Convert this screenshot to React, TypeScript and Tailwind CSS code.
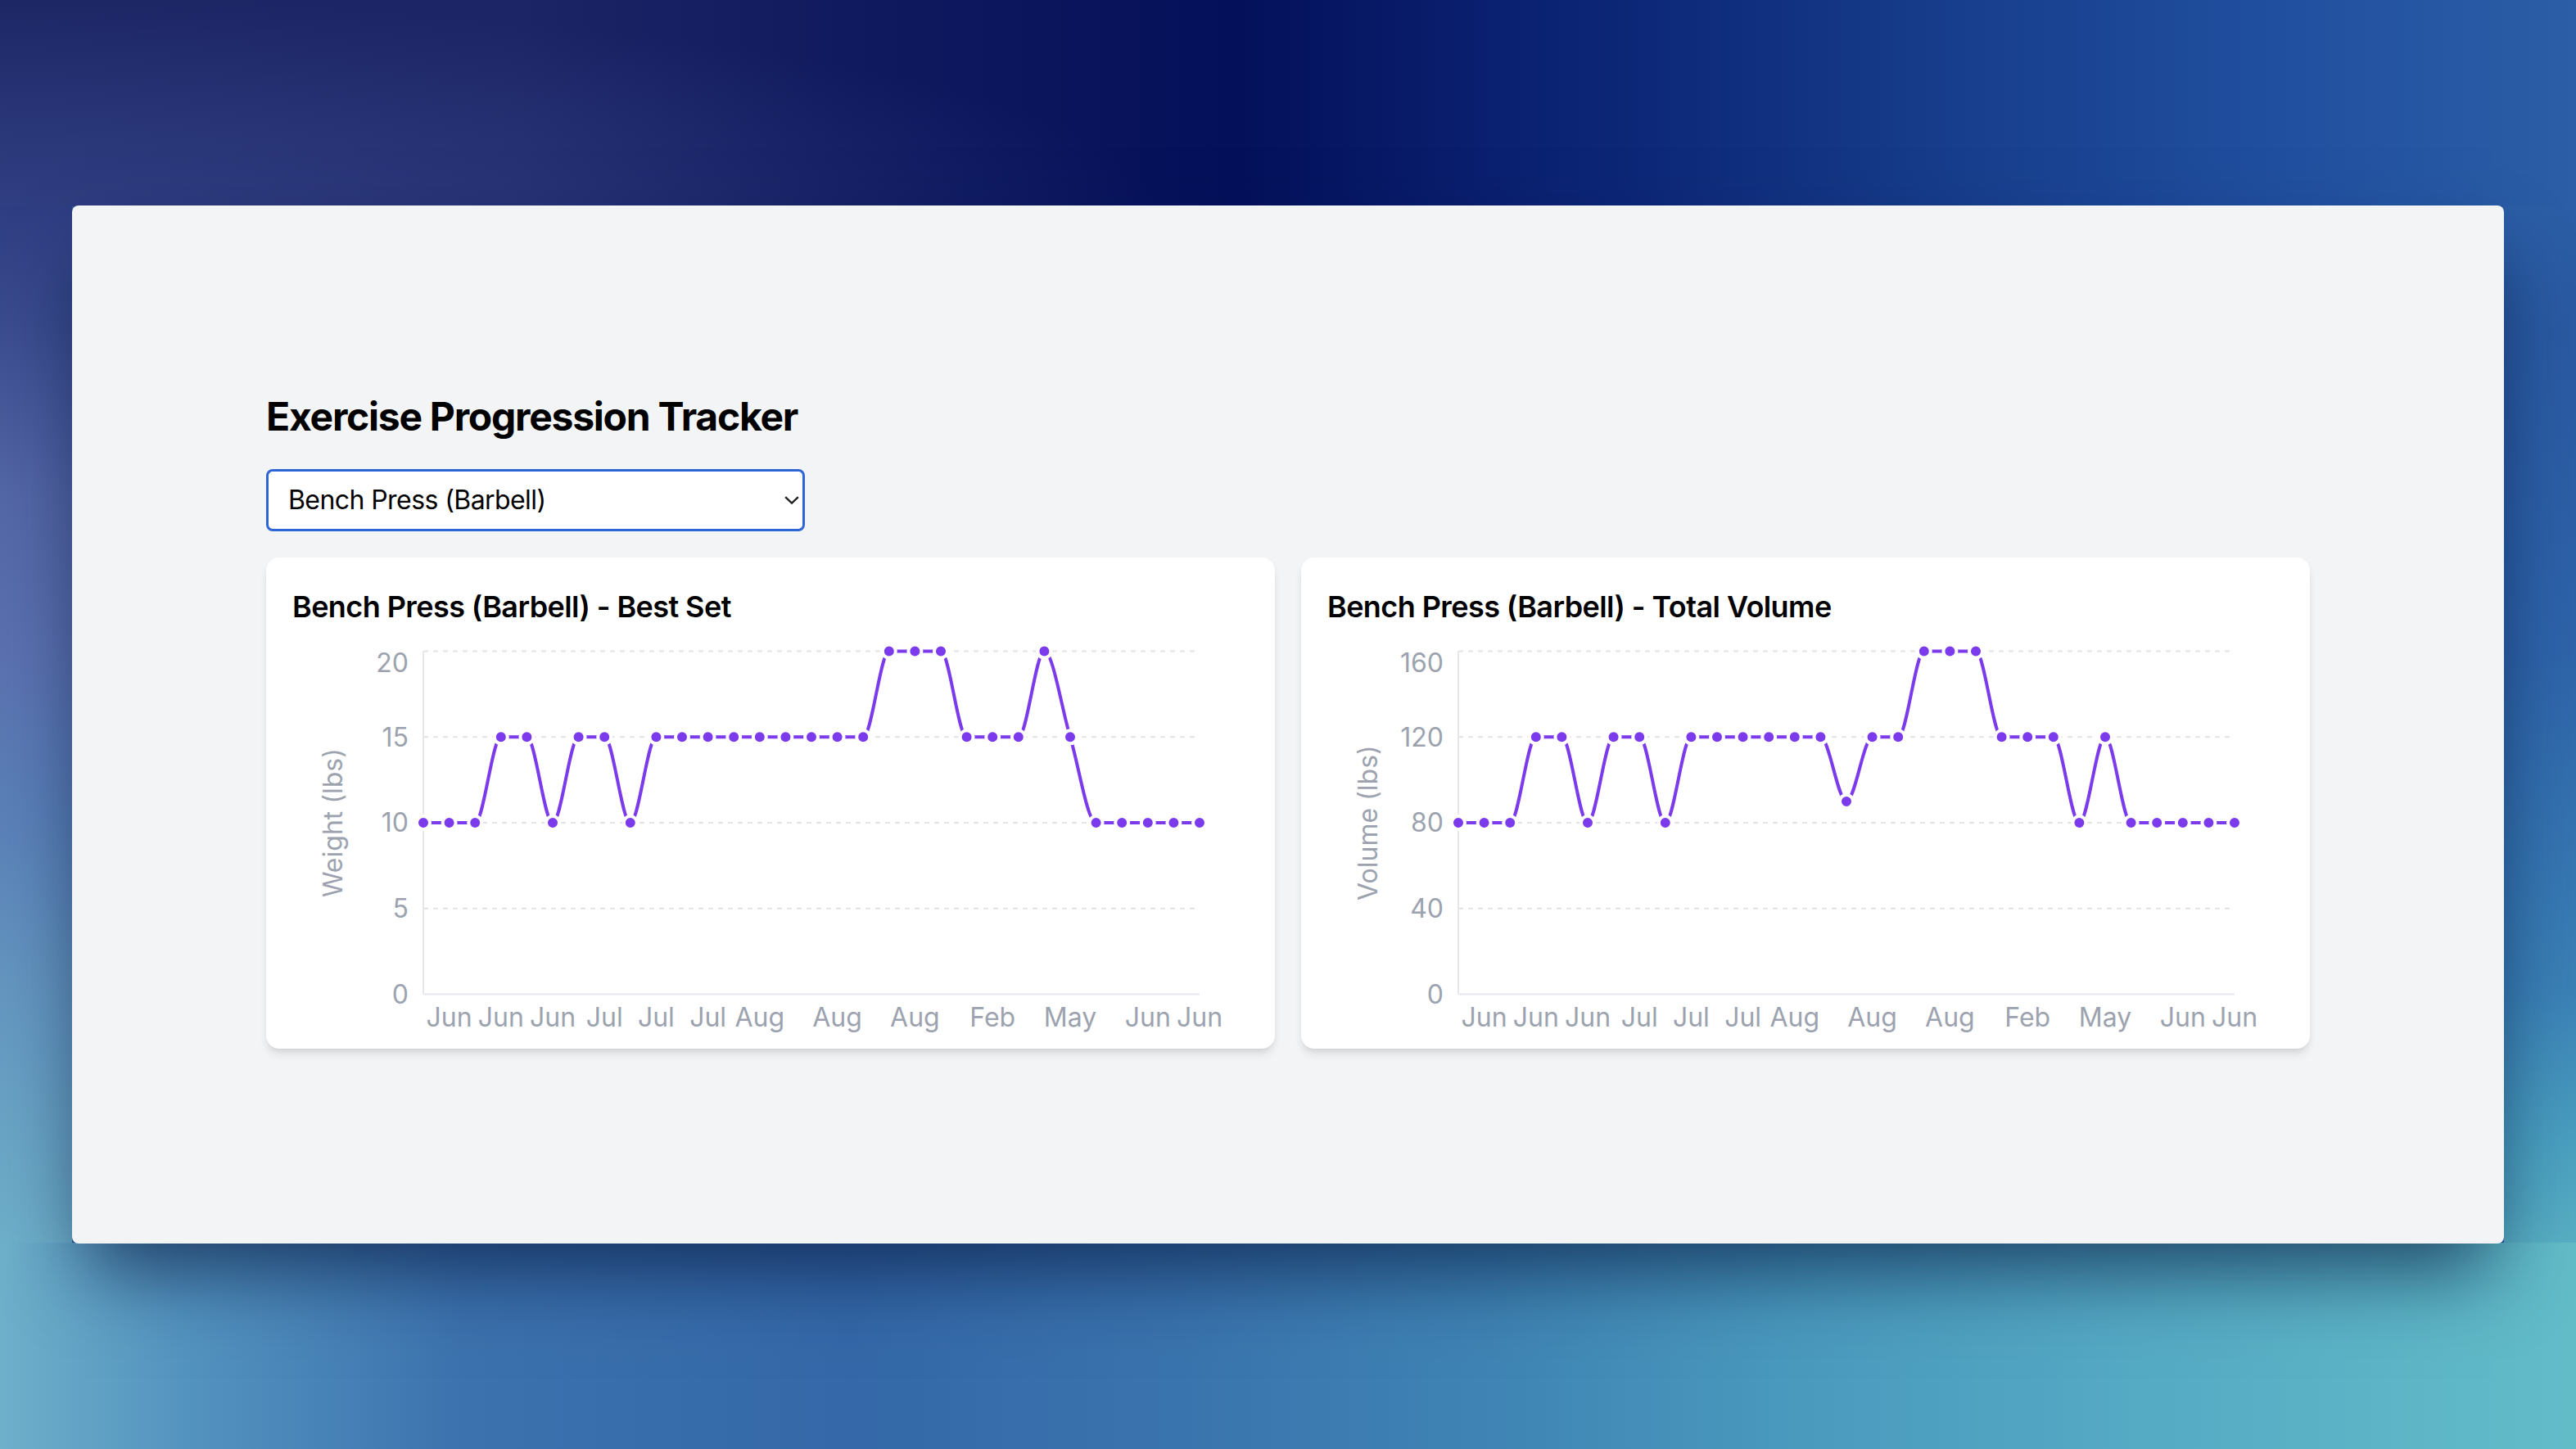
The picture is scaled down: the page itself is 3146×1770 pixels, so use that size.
import React from "react";

const best = [10, 10, 10, 15, 15, 10, 15, 15, 10, 15, 15, 15, 15, 15, 15, 15, 15, 15, 20, 20, 20, 15, 15, 15, 20, 15, 10, 10, 10, 10, 10];
const volume = [80, 80, 80, 120, 120, 80, 120, 120, 80, 120, 120, 120, 120, 120, 120, 90, 120, 120, 160, 160, 160, 120, 120, 120, 80, 120, 80, 80, 80, 80, 80];

const xLabels: [number, string][] = [
  [1, "Jun"],
  [3, "Jun"],
  [5, "Jun"],
  [7, "Jul"],
  [9, "Jul"],
  [11, "Jul"],
  [13, "Aug"],
  [16, "Aug"],
  [19, "Aug"],
  [22, "Feb"],
  [25, "May"],
  [28, "Jun"],
  [30, "Jun"],
];

function monotoneX(pts: [number, number][]): string {
  const n = pts.length;
  const t: number[] = new Array(n).fill(0);
  const sg = (v: number) => (v < 0 ? -1 : 1);
  for (let i = 1; i < n - 1; i++) {
    const [x0, y0] = pts[i - 1];
    const [x1, y1] = pts[i];
    const [x2, y2] = pts[i + 1];
    const h0 = x1 - x0;
    const h1 = x2 - x1;
    const s0 = (y1 - y0) / h0;
    const s1 = (y2 - y1) / h1;
    const p = (s0 * h1 + s1 * h0) / (h0 + h1);
    t[i] = (sg(s0) + sg(s1)) * Math.min(Math.abs(s0), Math.abs(s1), 0.5 * Math.abs(p)) || 0;
  }
  t[0] = (3 * (pts[1][1] - pts[0][1]) / (pts[1][0] - pts[0][0]) - t[1]) / 2;
  t[n - 1] = (3 * (pts[n - 1][1] - pts[n - 2][1]) / (pts[n - 1][0] - pts[n - 2][0]) - t[n - 2]) / 2;
  let d = `M${pts[0][0]},${pts[0][1]}`;
  for (let i = 0; i < n - 1; i++) {
    const [x0, y0] = pts[i];
    const [x1, y1] = pts[i + 1];
    const dx = (x1 - x0) / 3;
    d += `C${x0 + dx},${y0 + dx * t[i]},${x1 - dx},${y1 - dx * t[i + 1]},${x1},${y1}`;
  }
  return d;
}

const PL = 80;
const PR = 554;
const PT = 13.3;
const PB = 222.8;

function ChartCard({
  title,
  data,
  max,
  ticks,
  yLabel,
}: {
  title: string;
  data: number[];
  max: number;
  ticks: number[];
  yLabel: string;
}) {
  const n = data.length;
  const xs = (i: number) => PL + (i * (PR - PL)) / (n - 1);
  const ys = (v: number) => PB - (v / max) * (PB - PT);
  const pts: [number, number][] = data.map((v, i) => [xs(i), ys(v)]);
  const midY = (PT + PB) / 2;
  return (
    <div className="bg-white rounded-lg shadow-md p-4">
      <h2 className="text-lg leading-7 font-semibold tracking-[-0.016em] text-black">{title}</h2>
      <svg width={584} height={240} className="block overflow-visible">
        {ticks
          .filter((t) => t > 0)
          .map((t) => (
            <line key={t} x1={PL} x2={PR} y1={ys(t)} y2={ys(t)} stroke="#e2e4e8" strokeDasharray="3 3" strokeWidth={1} />
          ))}
        <line x1={PL} x2={PL} y1={PT} y2={PB} stroke="#e5e7eb" strokeWidth={1} />
        <line x1={PL} x2={PR} y1={PB} y2={PB} stroke="#e5e7eb" strokeWidth={1} />
        {ticks.map((t) => (
          <text
            key={t}
            x={71}
            y={t === max ? ys(t) + 7 : ys(t)}
            dy="0.355em"
            textAnchor="end"
            fontSize={16}
            fill="#9ca3af"
          >
            {t}
          </text>
        ))}
        {xLabels.map(([i, l]) => (
          <text key={i} x={xs(i)} y={PB + 19.8} textAnchor="middle" fontSize={16} fill="#9ca3af">
            {l}
          </text>
        ))}
        <text
          x={25}
          y={midY}
          dy="0.355em"
          textAnchor="middle"
          fontSize={16}
          fill="#9ca3af"
          transform={`rotate(-90 25 ${midY})`}
        >
          {yLabel}
        </text>
        <path d={monotoneX(pts)} fill="none" stroke="#7c3aed" strokeWidth={2} />
        {pts.map(([x, y], i) => (
          <circle key={i} cx={x} cy={y} r={4} fill="#7c3aed" stroke="#ffffff" strokeWidth={2} />
        ))}
      </svg>
    </div>
  );
}

export default function App() {
  return (
    <div className="[zoom:2] w-[1573px] h-[885px] overflow-hidden pt-[125.5px] px-11 bg-[#2c5aa0] bg-no-repeat [background-image:radial-gradient(45%_100%_at_0%_100%,rgba(72,92,165,0.45),rgba(72,92,165,0)),linear-gradient(to_right,#1d2766_0%,#1c2565_20%,#101a5e_33%,#04105a_48%,#0a2070_58%,#0d2878_64%,#173e8c_76%,#2150a0_89%,#2b5ea6_100%),linear-gradient(to_right,#6eb0ca_0%,#5494c0_7%,#3c72ae_18%,#3468a8_33%,#3a74ae_46%,#3f84b4_58%,#4a9abe_70%,#55aac4_83%,#62bcc8_100%),linear-gradient(to_bottom,#2e3d82_14%,#3a4b8e_22%,#5366a6_34%,#5b71b0_45%,#5a80b8_56%,#6496c0_68%,#6aa6c6_79%,#6eb0ca_86%),linear-gradient(to_bottom,#2b5ea6_14%,#2a5aa2_23%,#2e64aa_45%,#3a80b6_68%,#4aa0c0_79%,#58b0c4_86%)] [background-size:100%_126px,100%_126px,100%_126px,44px_100%,44px_100%] [background-position:top,top,bottom,left,right] [font-family:Inter,'Noto_Sans',sans-serif]">
      <div className="h-[634px] bg-gray-100 rounded-[4px] shadow-[0_24px_45px_-8px_rgba(5,20,60,0.68)] flex justify-center">
        <div className="w-[1248px] pt-[113px]">
          <h1 className="text-2xl font-bold tracking-[-0.026em] text-black mb-4">Exercise Progression Tracker</h1>
          <div className="relative w-[329px] mb-4">
            <select
              defaultValue="bench"
              className="appearance-none w-full h-[38px] pl-3 pr-8 bg-white border-[1.5px] border-[#2d64d6] rounded text-base tracking-[-0.018em] text-black outline-none"
            >
              <option value="bench">Bench Press (Barbell)</option>
              <option value="squat">Squat (Barbell)</option>
              <option value="deadlift">Deadlift (Barbell)</option>
            </select>
            <svg
              className="absolute right-[3.5px] top-1/2 -translate-y-1/2 pointer-events-none"
              width={9}
              height={5}
              viewBox="0 0 9 5"
            >
              <path d="M0.6 0.6 L4.5 4.3 L8.4 0.6" fill="none" stroke="#222" strokeWidth={1.2} />
            </svg>
          </div>
          <div className="grid grid-cols-2 gap-4">
            <ChartCard
              title="Bench Press (Barbell) - Best Set"
              data={best}
              max={20}
              ticks={[0, 5, 10, 15, 20]}
              yLabel="Weight (lbs)"
            />
            <ChartCard
              title="Bench Press (Barbell) - Total Volume"
              data={volume}
              max={160}
              ticks={[0, 40, 80, 120, 160]}
              yLabel="Volume (lbs)"
            />
          </div>
        </div>
      </div>
    </div>
  );
}
